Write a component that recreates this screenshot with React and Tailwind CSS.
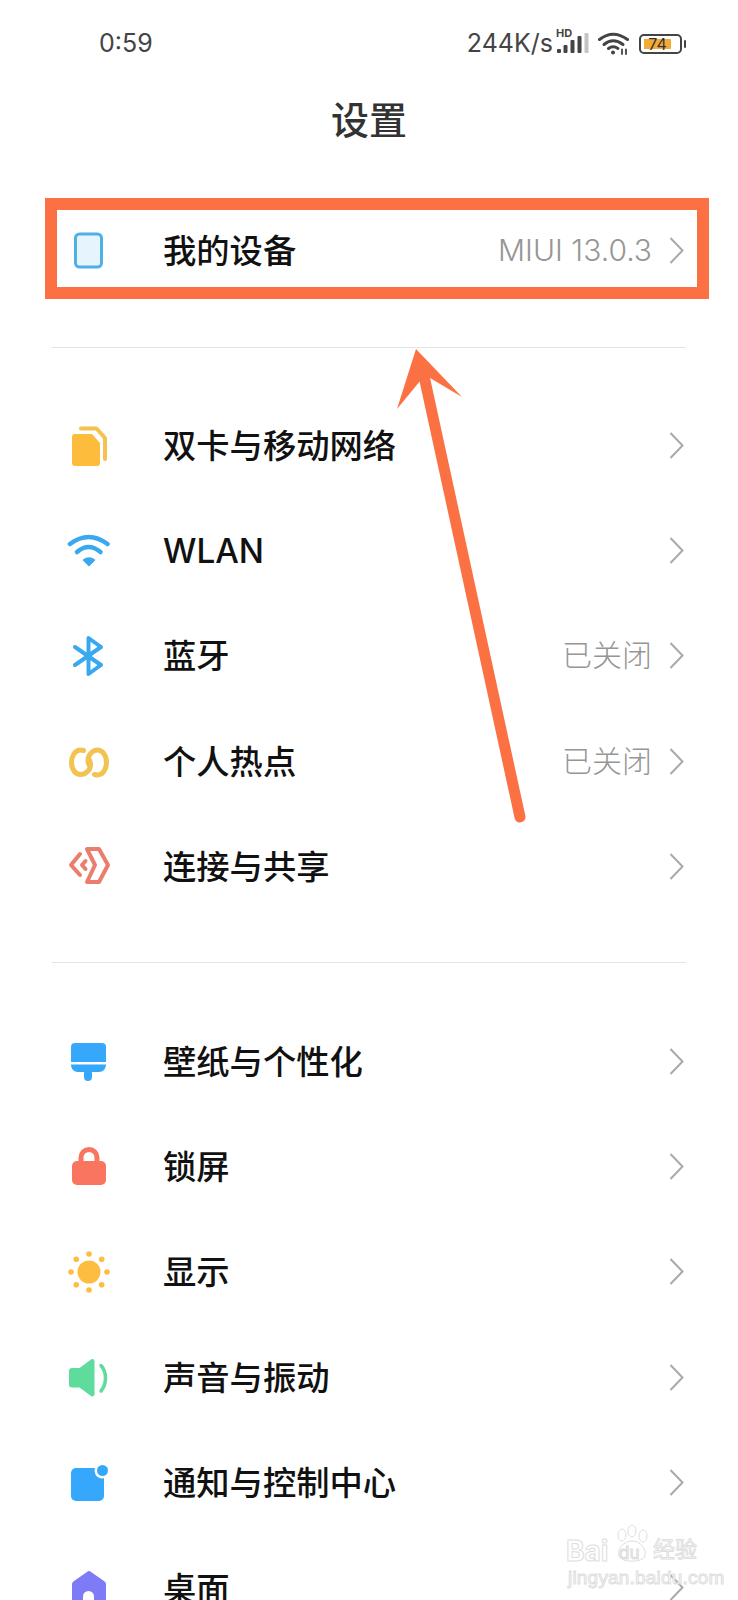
import React from 'react';

const SimIcon = () => (
  <svg width="48" height="48" viewBox="0 0 48 48" fill="none">
    <path d="M16 5.500H31.500L40 15V36" stroke="#f5c14f" strokeWidth="4" strokeLinecap="round" strokeLinejoin="round" />
    <path d="M10 11H27L35 20V40a3 3 0 0 1-3 3H10a3 3 0 0 1-3-3V14a3 3 0 0 1 3-3Z" fill="#febc3d" />
  </svg>
);

const WifiIcon = () => (
  <svg width="48" height="48" viewBox="0 0 48 48" fill="none" stroke="#38a9ee" strokeWidth="4.500" strokeLinecap="round">
    <path d="M5 16Q23.500 2 42.500 16" />
    <path d="M12 24Q23.500 14 35.500 24" />
    <path d="M18.500 32Q24 28 29.500 32L24 37.500Z" fill="#38a9ee" strokeWidth="1.500" strokeLinejoin="round" />
  </svg>
);

const BluetoothIcon = () => (
  <svg width="48" height="48" viewBox="0 0 48 48" fill="none" stroke="#38a9ee" strokeWidth="4" strokeLinecap="round" strokeLinejoin="round">
    <path d="M10 14L36 32L23.500 41V5L36 14L10 32" />
  </svg>
);

const HotspotIcon = () => (
  <svg width="48" height="48" viewBox="0 0 48 48" fill="none" stroke="#f2c350" strokeWidth="5" strokeLinecap="round">
    <path d="M18.500 11.500C17.500 11.200 16.500 11 15.500 11C10 11 6.500 17 6.500 23.500C6.500 30.500 10.500 35.500 15.500 35.500C20.500 35.500 25.500 31 25.500 26C25.500 24 25 22 24 20.500" />
    <path d="M29.500 35.500C30.500 35.800 31.500 36 32.500 36C38 36 41.500 30 41.500 23.500C41.500 16.500 37.500 11 32.500 11C27.500 11 23 16 23 21C23 23 23.500 25 24.500 26.500" />
  </svg>
);

const ShareIcon = () => (
  <svg width="48" height="48" viewBox="0 0 48 48" fill="none" stroke="#ea7d6c" strokeWidth="4" strokeLinecap="round" strokeLinejoin="round">
    <path d="M15 10L6 21L15 31" />
    <path d="M20.500 17L17 21L20.500 25" />
    <path d="M22 5H34L43 21L34 38H22L30 21Z" />
  </svg>
);

const BrushIcon = () => (
  <svg width="48" height="48" viewBox="0 0 48 48" fill="#36a8fb">
    <path d="M10 4H37a4 4 0 0 1 4 4V23H6V8a4 4 0 0 1 4-4Z" />
    <path d="M6 25.500H41C41 30 38 33 34 33H27V38a4 4 0 0 1-8 0V33H13C9 33 6 30 6 25.500Z" />
  </svg>
);

const LockIcon = () => (
  <svg width="48" height="48" viewBox="0 0 48 48" fill="none">
    <path d="M16 20V13.500a8 8 0 0 1 16 0V20" stroke="#f9755f" strokeWidth="5" />
    <rect x="7" y="17" width="34" height="24" rx="5" fill="#f9755f" />
  </svg>
);

const SunIcon = () => {
  const dots = [0, 45, 90, 135, 180, 225, 270, 315];
  return (
    <svg width="48" height="48" viewBox="0 0 48 48" fill="#fdbd41">
      <circle cx="24" cy="23" r="11.500" />
      {dots.map(a => (
        <circle key={a} cx={24 + 18 * Math.cos(a * Math.PI / 180)} cy={23 + 18 * Math.sin(a * Math.PI / 180)} r="2.800" />
      ))}
    </svg>
  );
};

const SoundIcon = () => (
  <svg width="48" height="48" viewBox="0 0 48 48" fill="none">
    <path d="M7 13H14.500L26 4.500C28 3.500 29.500 4.500 29.500 6.500V39C29.500 41 28 42 26 41L14.500 32.500H7a3 3 0 0 1-3-3V16a3 3 0 0 1 3-3Z" fill="#5fdc9b" />
    <path d="M36 10.500C42 17 42 29 36 36" stroke="#5fdc9b" strokeWidth="3.500" strokeLinecap="round" />
  </svg>
);

const NoticeIcon = () => (
  <svg width="48" height="48" viewBox="0 0 48 48">
    <rect x="6" y="8" width="33" height="33" rx="5" fill="#36a8fb" />
    <circle cx="37.500" cy="10.500" r="8" fill="#fff" />
    <circle cx="37.500" cy="10.500" r="5.500" fill="#36a8fb" />
  </svg>
);

const HomeIcon = () => (
  <svg width="48" height="48" viewBox="0 0 48 48">
    <path d="M22 7a3 3 0 0 1 4 0L39 16a4 4 0 0 1 2 4V48H7V20a4 4 0 0 1 2-4Z" fill="#7d7bf6" />
    <path d="M18 48V31.500a5.500 5.500 0 0 1 11 0V48Z" fill="#fff" />
  </svg>
);

const DeviceIcon = () => (
  <svg width="48" height="48" viewBox="0 0 48 48">
    <rect x="10.500" y="6" width="26" height="33" rx="4" fill="#e6f4fd" stroke="#4fb0e6" strokeWidth="3" />
  </svg>
);

const Chevron = () => (
  <svg width="15" height="27" viewBox="0 0 15 27" fill="none" stroke="#a9a9a9" strokeWidth="2">
    <path d="M1.500 1L13.500 13.500L1.500 26" />
  </svg>
);

const SignalIcon = () => (
  <svg width="32" height="24" viewBox="0 0 32 24" fill="#444">
    <rect x="0" y="17" width="4" height="4" rx="1" />
    <rect x="6.500" y="13" width="4" height="8" rx="1" />
    <rect x="13.500" y="8" width="4" height="13" rx="1" />
    <rect x="20.500" y="4" width="4" height="17" rx="1" />
    <rect x="27.500" y="1" width="4" height="20" rx="1" fill="#c4c4c4" />
  </svg>
);

const StatusWifi = () => (
  <svg width="32" height="24" viewBox="0 0 32 24" fill="none" stroke="#444" strokeWidth="3" strokeLinecap="round">
    <path d="M1.500 7.500Q15 -3 29.500 7.500" />
    <path d="M6 12.500Q15 5 25 12.500" />
    <path d="M10.500 16.500Q15 13 20 16.500" />
    <circle cx="15" cy="20.500" r="2" fill="#444" stroke="none" />
    <path d="M24 17.500V22M28 17.500V22" strokeWidth="1.800" />
  </svg>
);

const rowsA = [
  { icon: <SimIcon />, label: '双卡与移动网络' },
  { icon: <WifiIcon />, label: 'WLAN' },
  { icon: <BluetoothIcon />, label: '蓝牙', value: '已关闭' },
  { icon: <HotspotIcon />, label: '个人热点', value: '已关闭' },
  { icon: <ShareIcon />, label: '连接与共享' },
];

const rowsB = [
  { icon: <BrushIcon />, label: '壁纸与个性化' },
  { icon: <LockIcon />, label: '锁屏' },
  { icon: <SunIcon />, label: '显示' },
  { icon: <SoundIcon />, label: '声音与振动' },
  { icon: <NoticeIcon />, label: '通知与控制中心' },
  { icon: <HomeIcon />, label: '桌面' },
];

const Row = ({ icon, label, value }) => (
  <div className="flex items-center h-[105.4px] pl-[65px] pr-[54px]">
    <div className="w-[48px] h-[48px] shrink-0 mt-[3px]">{icon}</div>
    <div className="ml-[50px] flex-1 pt-[3px] text-[33.3px] font-medium text-[#111]">{label}</div>
    {value && <div className="text-[30px] font-light text-[#969696] mr-[17px]">{value}</div>}
    <Chevron />
  </div>
);

export default function App() {
  return (
    <div className="relative w-[738px] h-[1600px] overflow-hidden bg-white font-['Inter','Noto_Sans_CJK_SC',sans-serif]">
      {/* Status bar */}
      <div className="flex items-center justify-between h-[88px] pl-[99px] pr-[52px] text-[#444]">
        <span className="text-[25px]">0:59</span>
        <div className="flex items-center">
          <span className="text-[25px]">244K/s</span>
          <div className="relative w-[32px] h-[24px] ml-[4px] mr-[9px]">
            <SignalIcon />
            <span className="absolute -top-[4px] left-[-1px] text-[11px] leading-none font-bold">HD</span>
          </div>
          <StatusWifi />
          <div className="ml-[9px] flex items-center gap-[2px]">
            <div className="flex items-center w-[43px] h-[20px] p-[3px] border-2 border-[#444] rounded-[5px]">
              <div className="flex items-center justify-center w-[27px] h-full bg-[#f3ab37] text-[16px] leading-none text-[#333]">74</div>
            </div>
            <div className="w-[2px] h-[8px] bg-[#444] rounded-full" />
          </div>
        </div>
      </div>

      {/* Title */}
      <div className="h-[64px] mb-[46px] flex items-center justify-center text-[38px] font-medium text-[#333]">设置</div>

      <Row icon={<DeviceIcon />} label="我的设备" value="MIUI 13.0.3" />

      <div className="h-px bg-[#e4e4e4] mx-[52px] mt-[44px] mb-[44px]" />
      {rowsA.map(r => <Row key={r.label} {...r} />)}

      <div className="h-px bg-[#e4e4e4] mx-[52px] mt-[43px] mb-[45px]" />
      {rowsB.map(r => <Row key={r.label} {...r} />)}

      {/* Annotation: box and arrow */}
      <div className="absolute left-[45px] top-[198px] w-[664px] h-[101px] border-[12px] border-[#fb7144]" />
      <svg className="absolute left-0 top-0" width="738" height="1600" viewBox="0 0 738 1600" fill="none">
        <path d="M520 817L424 376" stroke="#fb7144" strokeWidth="11" strokeLinecap="round" />
        <polygon points="416,349 462,397 425,375 397,409" fill="#fb7144" />
      </svg>

      {/* Watermark */}
      <div className="absolute left-[566px] top-[1523px] w-[140px] h-[70px] text-white [-webkit-text-stroke:1px_#dedede]">
        <span className="absolute left-0 top-[14px] text-[28px] leading-none font-bold">Bai</span>
        <svg className="absolute left-[46px] top-0" width="40" height="42" viewBox="0 0 40 42" fill="#fff" stroke="#dedede">
          <ellipse cx="10" cy="12" rx="4" ry="6" />
          <ellipse cx="20" cy="8" rx="4" ry="6" />
          <ellipse cx="31" cy="13" rx="4" ry="6" />
          <path d="M20 18C28 18 35 26 33 33C31 40 9 40 7 33C5 26 12 18 20 18Z" />
        </svg>
        <span className="absolute left-[53px] top-[22px] text-[17px] leading-none text-[#eee]">du</span>
        <span className="absolute left-[87px] top-[15px] text-[22px] leading-none">经验</span>
        <span className="absolute left-[2px] top-[45px] text-[19px] leading-none tracking-[0.2px] font-['Liberation_Sans',sans-serif]">jingyan.baidu.com</span>
      </div>
    </div>
  );
}
